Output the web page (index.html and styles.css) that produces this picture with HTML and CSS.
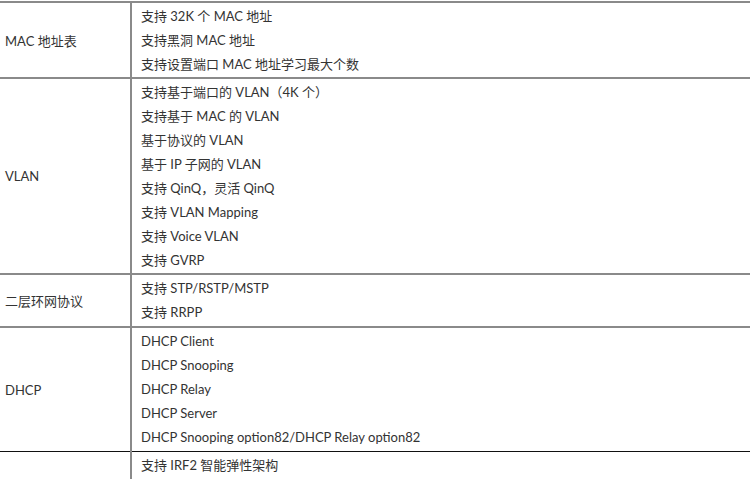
FILE: index.html
```html
<!DOCTYPE html>
<html lang="zh">
<head>
<meta charset="utf-8">
<link rel="stylesheet" href="styles.css">
</head>
<body>
<table class="spec">
  <tr class="r-mac">
    <td class="label">MAC 地址表</td>
    <td class="items">
      <div>支持 32K 个 MAC 地址</div>
      <div>支持黑洞 MAC 地址</div>
      <div>支持设置端口 MAC 地址学习最大个数</div>
    </td>
  </tr>
  <tr class="r-vlan">
    <td class="label">VLAN</td>
    <td class="items">
      <div>支持基于端口的 VLAN（4K 个）</div>
      <div>支持基于 MAC 的 VLAN</div>
      <div>基于协议的 VLAN</div>
      <div>基于 IP 子网的 VLAN</div>
      <div>支持 QinQ，灵活 QinQ</div>
      <div>支持 VLAN Mapping</div>
      <div>支持 Voice VLAN</div>
      <div>支持 GVRP</div>
    </td>
  </tr>
  <tr class="r-ring">
    <td class="label">二层环网协议</td>
    <td class="items">
      <div>支持 STP/RSTP/MSTP</div>
      <div>支持 RRPP</div>
    </td>
  </tr>
  <tr class="r-dhcp">
    <td class="label">DHCP</td>
    <td class="items">
      <div>DHCP Client</div>
      <div>DHCP Snooping</div>
      <div>DHCP Relay</div>
      <div>DHCP Server</div>
      <div>DHCP Snooping option82/DHCP Relay option82</div>
    </td>
  </tr>
  <tr class="r-irf">
    <td class="label"></td>
    <td class="items">
      <div>支持 IRF2 智能弹性架构</div>
    </td>
  </tr>
</table>
</body>
</html>
```
FILE: styles.css
```css
html, body {
  margin: 0;
  padding: 0;
  background: #ffffff;
}
body {
  font-family: "Lato", "Noto Sans CJK SC", sans-serif;
  font-size: 13px;
  color: #333333;
}
.spec {
  width: 750px;
  border-collapse: collapse;
  margin-top: 1px;
}
.spec td {
  padding: 0;
  vertical-align: middle;
  border-top: 2px solid #8a8a8a;
}
.spec .label {
  width: 125px;
  padding-left: 5px;
  border-right: 2px solid #8a8a8a;
}
.spec .items {
  padding: 1px 0 2px 9px;
}
.spec .r-mac .items {
  padding-top: 1px;
  padding-bottom: 1px;
}
.spec .r-vlan .items {
  padding-bottom: 1px;
}
.spec .items div {
  line-height: 24px;
  height: 24px;
}
.r-dhcp td {
  border-bottom: 1px solid #111111;
}
.r-irf td {
  border-top: 1px solid #111111;
}
```
